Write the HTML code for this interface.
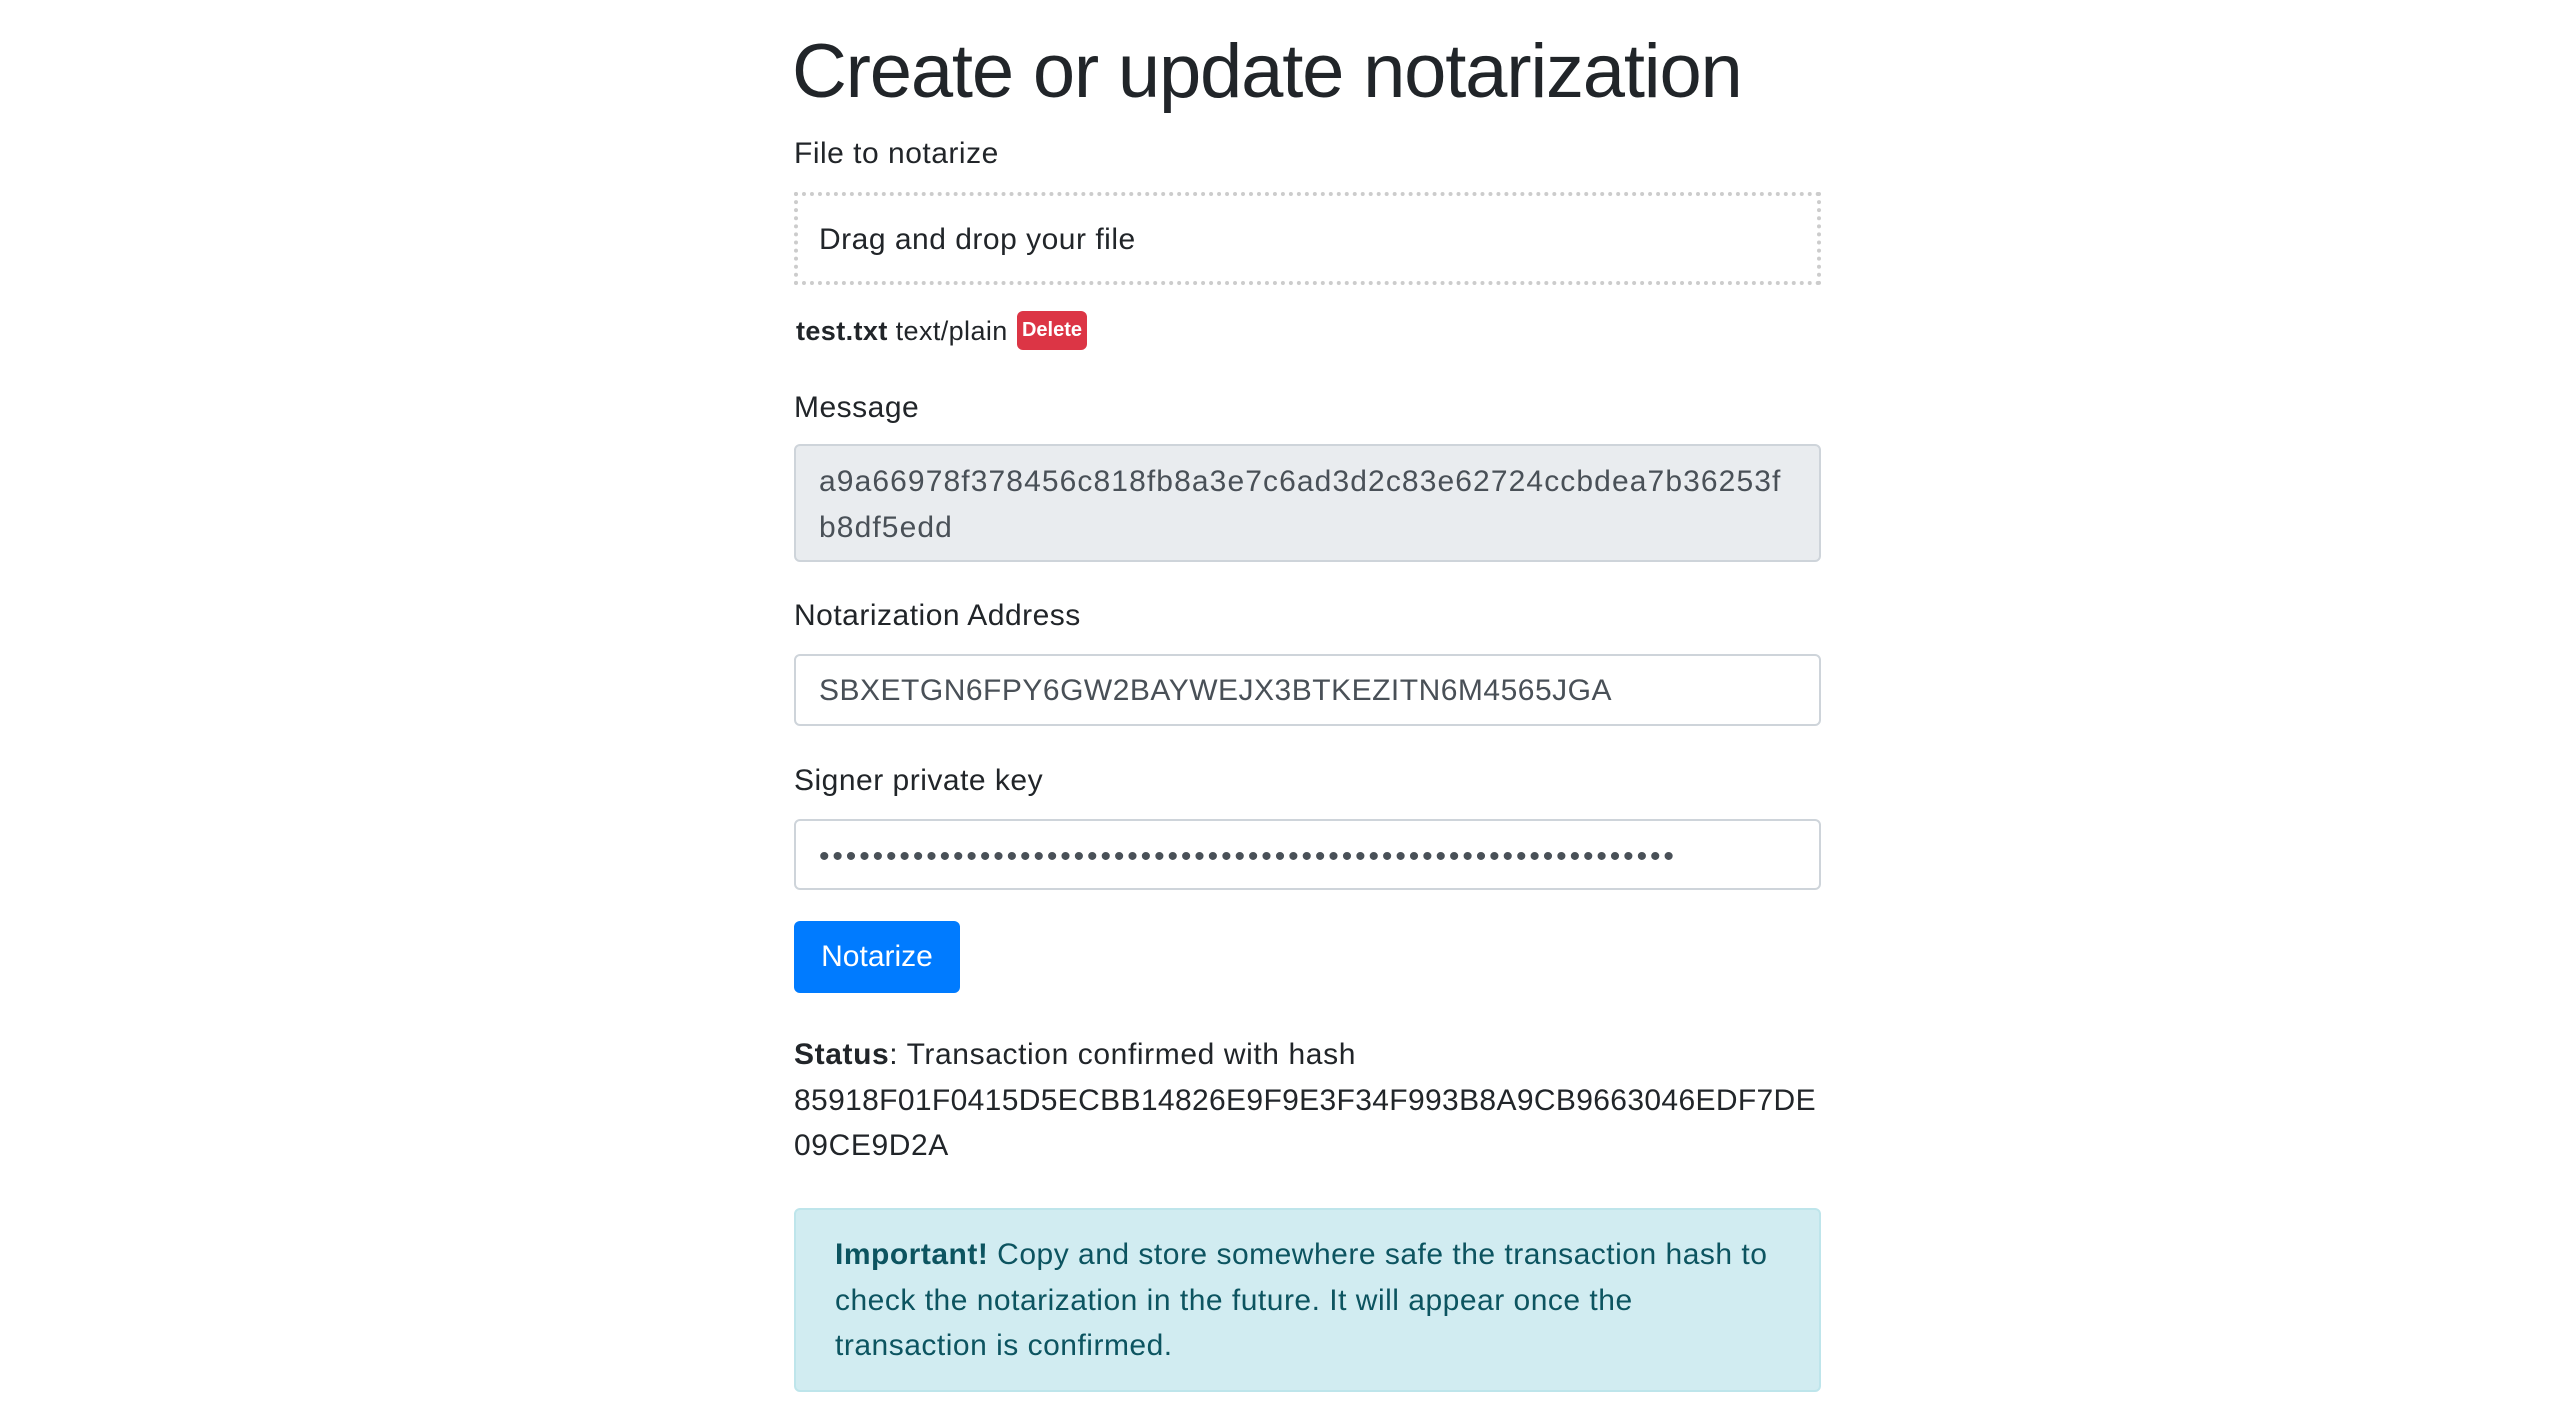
<!DOCTYPE html>
<html><head><meta charset="utf-8"><style>
*{box-sizing:border-box;margin:0;padding:0}
body{width:2552px;height:1417px;background:#fff;font-family:"Liberation Sans",Arial,sans-serif;color:#212529;position:relative;overflow:hidden}
.a{position:absolute;white-space:nowrap}
.lbl{font-size:30px;line-height:40px;letter-spacing:0.5px}
h1{position:absolute;left:792px;top:26px;font-size:76px;line-height:92px;font-weight:500;letter-spacing:-1.2px;color:#212529;white-space:nowrap}
.box{position:absolute;left:794px;width:1027px;border:2px solid #ced4da;border-radius:6px;background:#fff}
</style></head><body>
<h1>Create or update notarization</h1>
<div class="a lbl" style="left:794px;top:134px">File to notarize</div>
<div class="a" style="left:794px;top:192px;width:1027px;height:93px;border:4px dotted #ccc"></div>
<div class="a lbl" style="left:819px;top:220px">Drag and drop your file</div>
<div class="a" style="left:796px;top:311px;height:40px;line-height:40px;font-size:27px;letter-spacing:0.4px"><b>test.txt</b> text/plain</div>
<div class="a" style="left:1017px;top:311px;width:70px;height:39px;background:#dc3545;border-radius:6px;color:#fff;font-size:20px;font-weight:bold;text-align:center;line-height:39px">Delete</div>
<div class="a lbl" style="left:794px;top:388px">Message</div>
<div class="box" style="top:444px;height:118px;background:#e9ecef"></div>
<div class="a" style="left:819px;top:459px;font-size:30px;line-height:45.5px;color:#495057;letter-spacing:1.1px">a9a66978f378456c818fb8a3e7c6ad3d2c83e62724ccbdea7b36253f<br>b8df5edd</div>
<div class="a lbl" style="left:794px;top:596px">Notarization Address</div>
<div class="box" style="top:654px;height:72px"></div>
<div class="a lbl" style="left:819px;top:671px;color:#495057">SBXETGN6FPY6GW2BAYWEJX3BTKEZITN6M4565JGA</div>
<div class="a lbl" style="left:794px;top:761px">Signer private key</div>
<div class="box" style="top:819px;height:71px"></div>
<div class="a" style="left:819px;top:837px;font-size:30px;line-height:40px;letter-spacing:2.9px;color:#495057">••••••••••••••••••••••••••••••••••••••••••••••••••••••••••••••••</div>
<div class="a" style="left:794px;top:921px;width:166px;height:72px;background:#007bff;border-radius:6px;color:#fff;font-size:30px;line-height:72px;text-align:center">Notarize</div>
<div class="a" style="left:794px;top:1032px;font-size:30px;line-height:45.6px;letter-spacing:0.6px"><b>Status</b>: Transaction confirmed with hash<br><span style="letter-spacing:0.35px">85918F01F0415D5ECBB14826E9F9E3F34F993B8A9CB9663046EDF7DE</span><br>09CE9D2A</div>
<div class="a" style="left:794px;top:1208px;width:1027px;height:184px;background:#d1ecf1;border:2px solid #bee5eb;border-radius:6px"></div>
<div class="a" style="left:835px;top:1232px;font-size:30px;line-height:45.6px;color:#0c5460;letter-spacing:0.5px"><b>Important!</b> Copy and store somewhere safe the transaction hash to<br>check the notarization in the future. It will appear once the<br>transaction is confirmed.</div>
</body></html>
